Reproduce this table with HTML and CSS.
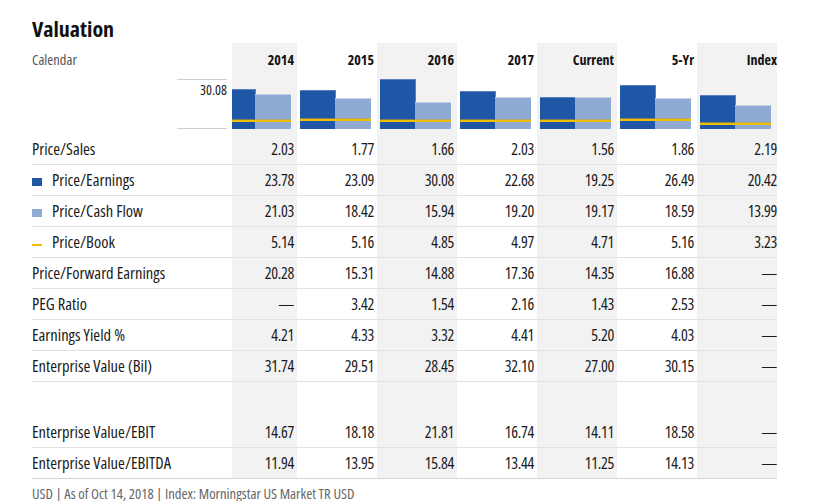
FILE: index.html
```html
<!DOCTYPE html>
<html lang="en">
<head>
<meta charset="utf-8">
<title>Valuation</title>
<link rel="stylesheet" href="styles.css">
</head>
<body>
<div class="page">
  <h1 class="title">Valuation</h1>
  <div class="tbl">
    <div class="row head">
      <div class="lab cal">Calendar</div>
      <div class="c g">2014</div>
      <div class="c">2015</div>
      <div class="c g">2016</div>
      <div class="c">2017</div>
      <div class="c g">Current</div>
      <div class="c">5-Yr</div>
      <div class="c g last">Index</div>
    </div>
    <div class="row chart">
      <div class="lab axiscell"><div class="axis">30.08</div></div>
      <div class="c g"><div class="plot first"><div class="bar pe" style="height:40px"></div><div class="bar pcf" style="height:35px"></div><div class="pb" style="bottom:7px"></div></div></div>
      <div class="c"><div class="plot"><div class="bar pe" style="height:39px"></div><div class="bar pcf" style="height:31px"></div><div class="pb" style="bottom:8px"></div></div></div>
      <div class="c g"><div class="plot"><div class="bar pe" style="height:50px"></div><div class="bar pcf" style="height:27px"></div><div class="pb" style="bottom:7px"></div></div></div>
      <div class="c"><div class="plot"><div class="bar pe" style="height:38px"></div><div class="bar pcf" style="height:32px"></div><div class="pb" style="bottom:7px"></div></div></div>
      <div class="c g"><div class="plot"><div class="bar pe" style="height:32px"></div><div class="bar pcf" style="height:32px"></div><div class="pb" style="bottom:7px"></div></div></div>
      <div class="c"><div class="plot"><div class="bar pe" style="height:44px"></div><div class="bar pcf" style="height:31px"></div><div class="pb" style="bottom:8px"></div></div></div>
      <div class="c g last"><div class="plot"><div class="bar pe" style="height:34px"></div><div class="bar pcf" style="height:24px"></div><div class="pb" style="bottom:4px"></div></div></div>
    </div>
    <div class="row">
      <div class="lab">Price/Sales</div>
      <div class="c g">2.03</div><div class="c">1.77</div><div class="c g">1.66</div><div class="c">2.03</div><div class="c g">1.56</div><div class="c">1.86</div><div class="c g last">2.19</div>
    </div>
    <div class="row">
      <div class="lab"><span class="mk mk-pe"></span>Price/Earnings</div>
      <div class="c g">23.78</div><div class="c">23.09</div><div class="c g">30.08</div><div class="c">22.68</div><div class="c g">19.25</div><div class="c">26.49</div><div class="c g last">20.42</div>
    </div>
    <div class="row">
      <div class="lab"><span class="mk mk-pcf"></span>Price/Cash Flow</div>
      <div class="c g">21.03</div><div class="c">18.42</div><div class="c g">15.94</div><div class="c">19.20</div><div class="c g">19.17</div><div class="c">18.59</div><div class="c g last">13.99</div>
    </div>
    <div class="row">
      <div class="lab"><span class="mk mk-pb"></span>Price/Book</div>
      <div class="c g">5.14</div><div class="c">5.16</div><div class="c g">4.85</div><div class="c">4.97</div><div class="c g">4.71</div><div class="c">5.16</div><div class="c g last">3.23</div>
    </div>
    <div class="row">
      <div class="lab">Price/Forward Earnings</div>
      <div class="c g">20.28</div><div class="c">15.31</div><div class="c g">14.88</div><div class="c">17.36</div><div class="c g">14.35</div><div class="c">16.88</div><div class="c g last">—</div>
    </div>
    <div class="row">
      <div class="lab">PEG Ratio</div>
      <div class="c g">—</div><div class="c">3.42</div><div class="c g">1.54</div><div class="c">2.16</div><div class="c g">1.43</div><div class="c">2.53</div><div class="c g last">—</div>
    </div>
    <div class="row">
      <div class="lab">Earnings Yield %</div>
      <div class="c g">4.21</div><div class="c">4.33</div><div class="c g">3.32</div><div class="c">4.41</div><div class="c g">5.20</div><div class="c">4.03</div><div class="c g last">—</div>
    </div>
    <div class="row">
      <div class="lab">Enterprise Value (Bil)</div>
      <div class="c g">31.74</div><div class="c">29.51</div><div class="c g">28.45</div><div class="c">32.10</div><div class="c g">27.00</div><div class="c">30.15</div><div class="c g last">—</div>
    </div>
    <div class="row blank">
      <div class="lab"></div>
      <div class="c g"></div><div class="c"></div><div class="c g"></div><div class="c"></div><div class="c g"></div><div class="c"></div><div class="c g last"></div>
    </div>
    <div class="row">
      <div class="lab">Enterprise Value/EBIT</div>
      <div class="c g">14.67</div><div class="c">18.18</div><div class="c g">21.81</div><div class="c">16.74</div><div class="c g">14.11</div><div class="c">18.58</div><div class="c g last">—</div>
    </div>
    <div class="row end">
      <div class="lab">Enterprise Value/EBITDA</div>
      <div class="c g">11.94</div><div class="c">13.95</div><div class="c g">15.84</div><div class="c">13.44</div><div class="c g">11.25</div><div class="c">14.13</div><div class="c g last">—</div>
    </div>
  </div>
  <div class="foot">USD | As of Oct 14, 2018 | Index: Morningstar US Market TR USD</div>
</div>
</body>
</html>
```

FILE: styles.css
```css
html, body {
  margin: 0;
  padding: 0;
  background: #fff;
}

body {
  font-family: "Open Sans", sans-serif;
  font-stretch: 75%;
  color: #1a1a1a;
}

.page {
  padding: 15px 0 0 32px;
}

.title {
  margin: 0;
  font-size: 22px;
  line-height: 26px;
  font-weight: bold;
  color: #111;
}

.tbl {
  margin-top: 2px;
  width: 745px;
}

.row {
  display: grid;
  grid-template-columns: 200px 65px repeat(6, 80px);
  border-bottom: 1px solid #e2e2e2;
}

.row .lab,
.row .c {
  height: 30px;
  line-height: 30px;
  font-size: 16.5px;
}

.row .c {
  font-size: 16px;
  letter-spacing: -0.3px;
}

.lab {
  display: flex;
  white-space: nowrap;
}

.c {
  text-align: right;
  padding-right: 3px;
  white-space: nowrap;
}

.c.last {
  padding-right: 0;
}

.g {
  background: #f2f2f2;
}

/* header */
.row.head {
  border-bottom: 0;
}

.row.head .lab,
.row.head .c {
  height: 36px;
  padding-top: 9px;
  line-height: 16px;
  font-size: 14.5px;
  box-sizing: border-box;
}

.row.head .c {
  font-size: 14px;
  letter-spacing: 0;
  font-weight: bold;
  color: #111;
}

.cal {
  color: #555;
}

/* chart row */
.row.chart {
  border-bottom: 0;
}

.row.chart .lab,
.row.chart .c {
  height: 55px;
  line-height: normal;
  padding-right: 0;
}

.axiscell {
  justify-content: flex-end;
}

.axis {
  width: 50px;
  height: 50px;
  margin-right: 5px;
  box-sizing: border-box;
  border-top: 1px solid #cfcfcf;
  border-bottom: 1px solid #cfcfcf;
  padding-top: 2px;
  font-size: 14px;
  line-height: 16px;
  text-align: right;
  color: #222;
}

.plot {
  position: relative;
  display: flex;
  align-items: flex-end;
  height: 50px;
  padding-left: 3px;
}

.plot.first {
  padding-left: 0;
}

.bar {
  box-sizing: border-box;
}

.bar.pe {
  width: 36px;
  background: #2056a6;
  border-top: 1px solid #5a80bf;
  border-right: 1px solid #5a80bf;
}

.plot.first .bar.pe {
  width: 24px;
}

.bar.pcf {
  width: 36px;
  margin-left: -1px;
  background: #8faad3;
  border-top: 1px solid #c3d1e9;
}

.pb {
  position: absolute;
  left: 3px;
  width: 71px;
  height: 2px;
  background: #efbf08;
  box-shadow: 0 -1px 0 rgba(200, 165, 20, 0.55);
}

.plot.first .pb {
  left: 0;
  width: 59px;
}

/* legend markers */
.mk {
  display: block;
  flex: none;
  width: 10px;
  margin-right: 10px;
  align-self: flex-start;
}

.mk-pe {
  height: 8px;
  margin-top: 13px;
  background: #2056a6;
}

.mk-pcf {
  height: 8px;
  margin-top: 13px;
  background: #8faad3;
}

.mk-pb {
  height: 2px;
  margin-top: 17px;
  background: #efbf08;
}

/* spacer */
.row.blank {
  border-bottom: 0;
}

.row.blank .lab,
.row.blank .c {
  height: 35px;
}

.row.end {
  border-bottom-color: #d4d4d4;
}

.foot {
  margin-top: 6px;
  font-size: 14.6px;
  line-height: 16px;
  color: #666;
}
```
